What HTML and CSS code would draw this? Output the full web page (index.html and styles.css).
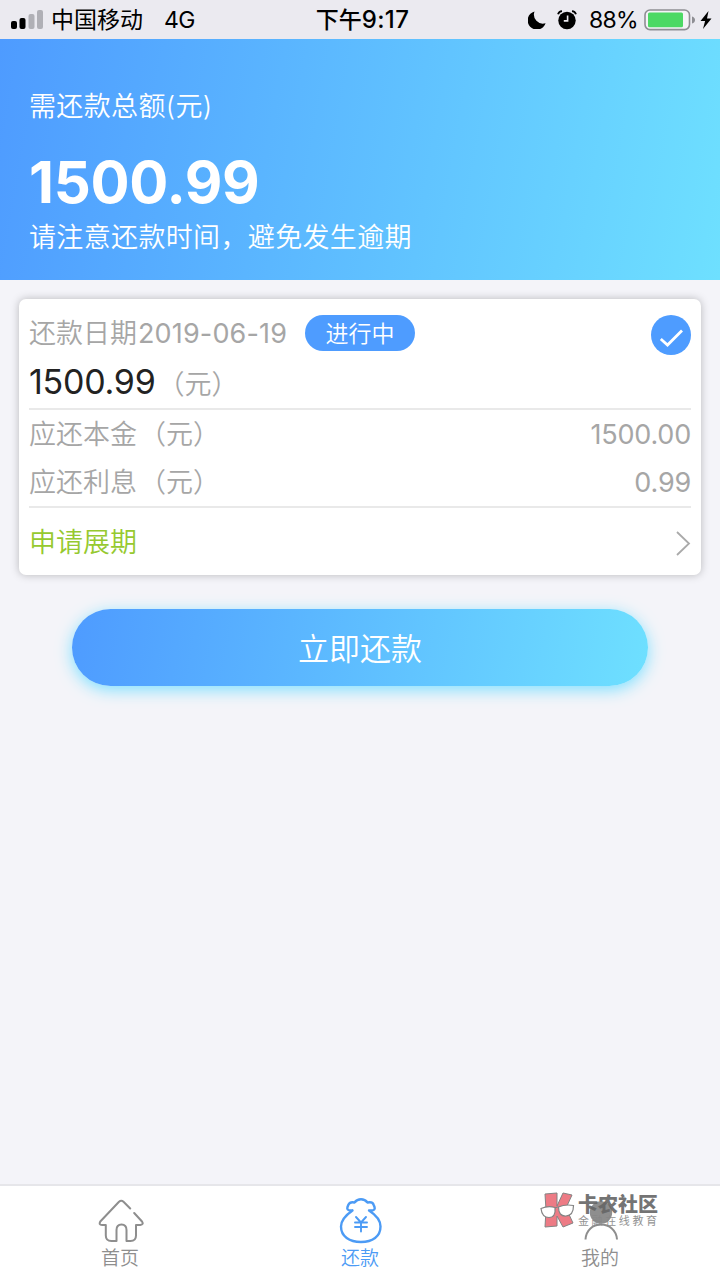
FILE: index.html
```
<!DOCTYPE html>
<html lang="zh-CN">
<head>
  <meta charset="utf-8">
  <meta name="viewport" content="width=device-width, initial-scale=1.0">
  <title>还款</title>
  <link rel="stylesheet" href="styles.css">
</head>
<body>
<div class="status">
  <div class="status-left">
    <svg class="signal" width="33" height="20" viewBox="0 0 33 20">
      <rect x="0" y="11" width="6" height="8" rx="2" fill="#000"/>
      <rect x="8.5" y="8" width="6" height="11" rx="2" fill="#000"/>
      <rect x="17.5" y="4" width="6" height="15" rx="2" fill="#b0b0b6"/>
      <rect x="26" y="0" width="6" height="19" rx="2" fill="#b0b0b6"/>
    </svg>
    <span class="carrier">中国移动</span>
    <span class="net">4G</span>
  </div>
  <div class="clock">下午<span class="time">9:17</span></div>
  <div class="status-right">
    <svg width="18" height="18" viewBox="0 0 18 18"><path d="M6.5.5A9.2 9.2 0 1 0 17.6 12.2 9 9 0 0 1 6.5.5z"/></svg>
    <svg class="alarm" width="20" height="20" viewBox="0 0 20 20">
      <circle cx="10" cy="10.5" r="8.7"/>
      <path d="M1 4.2Q2 1.5 5 1.2M19 4.2Q18 1.5 15 1.2" fill="none" stroke="#000" stroke-width="1.8"/>
      <path d="M10.6 5.5v5.4H6.8" fill="none" stroke="#ebeaf0" stroke-width="1.6"/>
    </svg>
    <span class="percent">88%</span>
    <svg class="battery" width="52" height="22" viewBox="0 0 52 22">
      <rect x="1" y="1" width="44.5" height="19.6" rx="5" fill="#f4f3f7" stroke="#8e8e93" stroke-width="1.6"/>
      <rect x="4" y="3.6" width="35" height="14.6" rx="1.5" fill="#4cd964"/>
      <path d="M48 7.5q3 1 3 3.5t-3 3.5z" fill="#8e8e93"/>
    </svg>
    <svg class="bolt" width="12" height="18" viewBox="0 0 12 18"><path d="M8.5 0L.5 10h4.6L3 18l8.5-10.5H7z"/></svg>
  </div>
</div>

<div class="total">
  <div class="total-label">需还款总额(元)</div>
  <div class="total-num">1500.99</div>
  <div class="total-tip">请注意还款时间，避免发生逾期</div>
</div>

<div class="card">
  <div class="card-top">
    <span class="date">还款日期<span class="day">2019-06-19</span></span>
    <span class="badge">进行中</span>
    <svg class="check" width="40" height="40" viewBox="0 0 40 40">
      <circle cx="20" cy="20" r="20" fill="#4e9cff"/>
      <path d="M9.8 24l6.700 6L31 15.500" fill="none" stroke="#fff" stroke-width="2.8"/>
    </svg>
  </div>
  <div class="amount"><span class="amount-num">1500.99</span><i class="lp">（</i>元<i>）</i></div>
  <div class="detail">
    <div class="row"><span>应还本金<i class="lp">（</i>元<i>）</i></span><span class="val">1500.00</span></div>
    <div class="row"><span>应还利息<i class="lp">（</i>元<i>）</i></span><span class="val">0.99</span></div>
  </div>
  <div class="extend">
    <span>申请展期</span>
    <svg width="16" height="26" viewBox="0 0 16 26"><path d="M2 2l12 11.500L2 25" fill="none" stroke="#aaa" stroke-width="1.8"/></svg>
  </div>
</div>

<div class="pay">立即还款</div>

<div class="tabbar">
  <div class="tab">
    <svg width="48" height="46" viewBox="0 0 48 46" fill="none" stroke="#8e8e8e" stroke-width="2" stroke-linecap="round" stroke-linejoin="round">
      <path d="M34.2 10.5L27.5 3.8Q25.3 1.7 23 3.8L4.3 23.5Q2.5 27 6 27H9.8V37.5Q9.8 43 15.3 43H20.5V32Q20.5 26.5 25.5 26.5T30.5 32V43H34.5Q40 43 40 37.5V27H44.3Q48 26.5 46 23.5L38.2 15"/>
    </svg>
    <span>首页</span>
  </div>
  <div class="tab on">
    <svg width="48" height="46" viewBox="0 0 48 46" fill="none" stroke="#4c9bf5" stroke-width="2.4" stroke-linecap="round" stroke-linejoin="round">
      <path d="M16.5 12.5H14Q10.5 12 11.5 9L12.5 6.5Q14 3.5 18.5 4.5Q21 1.3 25 1.3T31.5 4.5Q36.5 3.5 37.5 6.5L38.5 9Q39.5 12 36 12.5H33C40 17 44.5 22 44.5 28.5C44.5 38.5 36.5 44 25 44S5 38.5 5 28.5C5 22 10 17 16.5 12.5"/>
      <path d="M20 19l5 5.500 5-5.500M25 24.500v9M19 24.500h12M19 29h12" stroke-width="1.9"/>
    </svg>
    <span>还款</span>
  </div>
  <div class="tab">
    <svg width="48" height="46" viewBox="0 0 48 46">
      <circle cx="25" cy="14.5" r="11.2" fill="#8e8e8e"/>
      <path d="M9.5 41.5C10 32 17 26.5 25 26.5S40.5 32 41 41.5" fill="none" stroke="#8e8e8e" stroke-width="2"/>
    </svg>
    <span>我的</span>
  </div>
  <div class="mark">
    <svg width="36" height="38" viewBox="0 0 36 38">
      <path d="M5 2L17 1v13L23 1l9 2-6 13 7 15-10 4-6-11v10L5 35l1-17z" fill="#ec6d78" stroke="#777" stroke-width="1"/>
      <path d="M1 16.5Q8 13.5 15 15.5Q16 25.5 9 25.5T1 16.5zM18.5 15Q25 12 33.5 13.5Q33.5 23.5 26 24T18.5 15zM15 16.5q2-2 3.5-1" fill="#fff" stroke="#777" stroke-width="1.2"/>
    </svg>
    <div class="mark-text">
      <div class="mark-name">卡农社区</div>
      <div class="mark-sub">金融在线教育</div>
    </div>
  </div>
</div>
</body>
</html>
```
FILE: styles.css
```
* {
  box-sizing: border-box;
}
body {
  margin: 0;
  height: 1280px;
  display: flex;
  flex-direction: column;
  background: #f4f4f9;
  font-family: Inter, "Noto Sans CJK SC", sans-serif;
  font-weight: 350;
  color: #a6a6a6;
  overflow: hidden;
}
i {
  font-style: normal;
}

/* status bar */
.status {
  height: 39px;
  padding: 0 8px 0 11px;
  display: grid;
  grid-template-columns: 1fr auto 1fr;
  align-items: center;
  background: #ebeaf0;
  color: #000;
  font-size: 23px;
  font-weight: 400;
  line-height: 38px;
}
.status-left,
.status-right {
  display: flex;
  align-items: center;
}
.status-right {
  justify-content: flex-end;
}
.carrier {
  margin-left: 7px;
}
.net {
  margin-left: 21px;
  letter-spacing: -.5px;
}
.clock {
  padding-left: 2px;
  font-weight: 500;
}
.time {
  font-size: 24px;
  letter-spacing: .4px;
}
.alarm {
  margin: 0 12px 0 11px;
}
.percent {
  letter-spacing: -.7px;
}
.battery {
  margin: 0 4px 0 6px;
}

/* total */
.total {
  height: 241px;
  padding: 50px 29px 0;
  background: linear-gradient(100deg, #4e9bff, #6ee0ff);
  color: #fff;
  font-size: 27px;
  line-height: 36px;
}
.total-label,
.total-tip {
  letter-spacing: .35px;
}
.total-num {
  height: 95px;
  font-size: 58px;
  font-weight: 650;
  letter-spacing: -.3px;
  line-height: 114px;
}

/* bill card */
.card {
  width: 682px;
  height: 276px;
  margin: 19px 0 0 19px;
  padding: 16px 10px 0;
  border-radius: 7px;
  background: #fff;
  box-shadow: 0 0 8px rgba(0, 0, 0, .25);
  font-size: 27px;
}
.card-top {
  display: flex;
  height: 40px;
  line-height: 37px;
}
.day {
  margin-left: 1px;
  font-weight: 400;
  letter-spacing: .15px;
}
.val {
  font-weight: 400;
  letter-spacing: -.2px;
}
.badge {
  width: 110px;
  height: 36px;
  margin-left: 18px;
  border-radius: 18px;
  background: #4e9cff;
  color: #fff;
  font-size: 23px;
  line-height: 38px;
  text-align: center;
}
.check {
  margin-left: auto;
}
.amount {
  height: 55px;
  border-bottom: 2px solid #e9e9e9;
  line-height: 54px;
}
.amount-num {
  color: #222;
  font-size: 34px;
  font-weight: 400;
  letter-spacing: -.25px;
}
.lp {
  margin-left: 2px;
}
.detail {
  height: 98px;
  border-bottom: 2px solid #e9e9e9;
}
.row {
  display: flex;
  justify-content: space-between;
  height: 48px;
  line-height: 50px;
}
.extend {
  display: flex;
  justify-content: space-between;
  align-items: center;
  height: 68px;
  color: #96c92f;
}
.extend span {
  margin-top: -3px;
}
.extend svg {
  margin-top: 2px;
}

.pay {
  width: 576px;
  height: 77px;
  margin: 34px auto 0;
  border-radius: 39px;
  background: linear-gradient(100deg, #4e9bff, #6ee0ff);
  box-shadow: 0 4px 16px #7fe0ff;
  color: #fff;
  font-size: 31px;
  line-height: 79px;
  text-align: center;
}

/* bottom tabs */
.tabbar {
  position: relative;
  display: flex;
  height: 96px;
  margin-top: auto;
  border-top: 2px solid #e6e6ea;
  background: #fff;
}
.tab {
  flex: 1;
  display: flex;
  flex-direction: column;
  align-items: center;
  padding-top: 12px;
  color: #8e8e8e;
  font-size: 19px;
  line-height: 29px;
}
.on {
  color: #4c9bf5;
}
/* community mark over the last tab */
.mark {
  position: absolute;
  left: 540px;
  top: 6px;
  display: flex;
  opacity: .9;
}
.mark-text {
  margin-left: 2px;
  color: #666;
  white-space: nowrap;
}
.mark-name {
  font-size: 20px;
  font-weight: 900;
  line-height: 26px;
}
.mark-sub {
  color: #888;
  font-size: 11px;
  font-weight: 400;
  letter-spacing: 2.6px;
  line-height: 7px;
}
```
